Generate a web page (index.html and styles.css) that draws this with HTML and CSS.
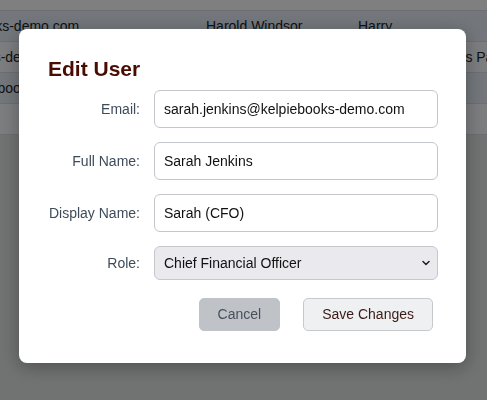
FILE: index.html
```html
<!DOCTYPE html>
<html lang="en">
<head>
<meta charset="utf-8">
<title>Edit User</title>
<link rel="stylesheet" href="styles.css">
</head>
<body>
<div class="page">
  <div class="users">
    <div class="row head"><span></span><span></span><span></span></div>
    <div class="row odd"><span>harold.windsor@kelpiebooks-demo.com</span><span>Harold Windsor</span><span>Harry</span></div>
    <div class="row even"><span>sarah.jenkins@kelpiebooks-demo.com</span><span>Sarah Jenkins</span><span>Eleanor (Accounts Payable)</span></div>
    <div class="row odd"><span>eleanor.pemberton@kelpiebooks-demo.com</span><span>Eleanor Pemberton</span><span>Ellie</span></div>
    <div class="row even last"><span></span><span></span><span></span></div>
  </div>
</div>

<div class="overlay">
  <div class="modal">
    <h2 class="modal-title">Edit User</h2>
    <form class="form">
      <label class="label" for="email">Email:</label>
      <input class="field" id="email" type="text" value="sarah.jenkins@kelpiebooks-demo.com">
      <label class="label" for="fullname">Full Name:</label>
      <input class="field" id="fullname" type="text" value="Sarah Jenkins">
      <label class="label" for="display">Display Name:</label>
      <input class="field" id="display" type="text" value="Sarah (CFO)">
      <label class="label" for="role">Role:</label>
      <div class="select-wrap">
        <select class="select" id="role">
          <option>Chief Financial Officer</option>
        </select>
        <svg class="chevron" width="8" height="6" viewBox="0 0 8 6"><path d="M1 1.5 L4 4.5 L7 1.5" fill="none" stroke="#222" stroke-width="1.5" stroke-linecap="round" stroke-linejoin="round"/></svg>
      </div>
    </form>
    <div class="actions">
      <button class="btn btn-cancel" type="button">Cancel</button>
      <button class="btn btn-save" type="button">Save Changes</button>
    </div>
  </div>
</div>
</body>
</html>
```

FILE: styles.css
```css
* { box-sizing: border-box; }

html, body {
  margin: 0;
  height: 100%;
}

body {
  font-family: "Liberation Sans", Arial, sans-serif;
  font-size: 14px;
  color: #212529;
  background: #e2e6e4;
  overflow: hidden;
}

.page {
  width: 100%;
  overflow: hidden;
}

.users {
  margin-left: -182px;
  width: 700px;
}

.row {
  display: grid;
  grid-template-columns: 376px 152px 172px;
  height: 31px;
  align-items: center;
  border-top: 1px solid #d8dde2;
  white-space: nowrap;
}

.row span {
  padding: 0 12px;
  overflow: hidden;
}

.row.head {
  height: 10px;
  border-top: none;
  background: #fefefe;
}

.row.odd { background: #e6eff8; }
.row.even { background: #f9fbfd; }
.row.last { height: 32px; border-bottom: 1px solid #d8dde2; }

.overlay {
  position: fixed;
  inset: 0;
  background: rgba(0, 0, 0, 0.5);
  display: flex;
  justify-content: flex-start;
  align-items: flex-start;
  padding: 29px 0 0 19px;
}

.modal {
  width: 447px;
  background: #fff;
  border-radius: 8px;
  padding: 27px 28px 32px 29px;
  box-shadow: 0 4px 18px rgba(0, 0, 0, 0.3);
}

.modal-title {
  margin: 0 0 9px;
  font-size: 21px;
  font-weight: bold;
  color: #4a0c00;
  line-height: 25px;
}

.form {
  display: grid;
  grid-template-columns: 92px 284px;
  column-gap: 14px;
  row-gap: 14px;
  align-items: center;
}

.label {
  text-align: right;
  color: #3e4b5b;
  font-size: 14px;
}

.field {
  height: 38px;
  width: 100%;
  border: 1px solid #c3c6ca;
  border-radius: 6px;
  padding: 0 9px;
  font-family: inherit;
  font-size: 14px;
  color: #111;
  background: #fff;
  outline: none;
}

.select-wrap {
  position: relative;
  height: 34px;
}

.select {
  appearance: none;
  -webkit-appearance: none;
  width: 100%;
  height: 34px;
  border: 1px solid #c6c7cb;
  border-radius: 6px;
  background: #e9e9ee;
  padding: 0 24px 0 9px;
  font-family: inherit;
  font-size: 14px;
  color: #111;
  outline: none;
}

.chevron {
  position: absolute;
  right: 8px;
  top: 14px;
}

.actions {
  display: flex;
  justify-content: flex-end;
  gap: 23px;
  margin-top: 18px;
  padding-right: 5px;
}

.btn {
  font-family: inherit;
  font-size: 14px;
  line-height: 15px;
  padding: 8px 18px;
  border-radius: 5px;
  border: 1px solid;
  cursor: pointer;
}

.btn-cancel {
  background: #bfc3c7;
  border-color: #bfc3c7;
  color: #46505d;
}

.btn-save {
  background: #eef0f2;
  border-color: #c6cacd;
  color: #3a1c16;
}
```
